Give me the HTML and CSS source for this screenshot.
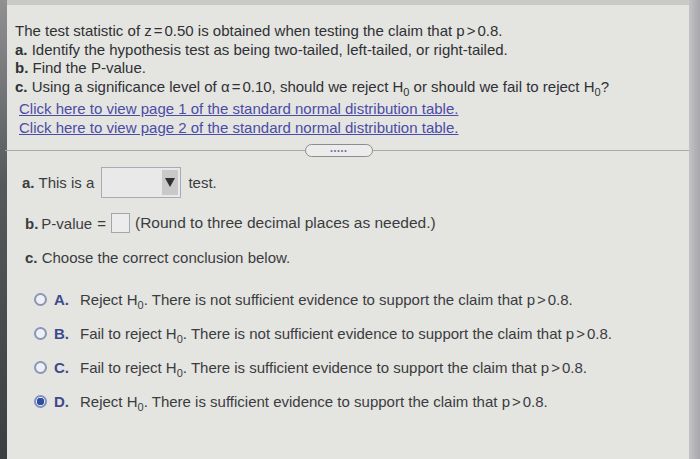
FILE: index.html
```html
<!DOCTYPE html>
<html>
<head>
<meta charset="utf-8">
<link rel="stylesheet" href="styles.css">
</head>
<body>
<div class="screen">
  <div class="leftbar"></div>
  <div class="main">
    <div class="topstrip"></div>
    <div class="question">
      <p class="line">The test statistic of z<span class="op">=</span>0.50 is obtained when testing the claim that p<span class="op">&gt;</span>0.8.</p>
      <p class="line"><span class="lbl">a.</span> Identify the hypothesis test as being two-tailed, left-tailed, or right-tailed.</p>
      <p class="line"><span class="lbl">b.</span> Find the P-value.</p>
      <p class="line"><span class="lbl">c.</span> Using a significance level of <i class="alpha">α</i><span class="op">=</span>0.10, should we reject H<sub>0</sub> or should we fail to reject H<sub>0</sub>?</p>
      <div class="links">
        <a class="link">Click here to view page 1 of the standard normal distribution table.</a>
        <a class="link">Click here to view page 2 of the standard normal distribution table.</a>
      </div>
    </div>
    <div class="divider">
      <span class="pill">•••••</span>
    </div>
    <div class="answers">
      <div class="row-a"><span class="lbl">a.</span> This is a <span class="select"><span class="arrow"></span></span> test.</div>
      <div class="row-b"><span class="lbl">b.</span> P-value <span class="op">=</span><span class="inputbox"></span> <span class="note">(Round to three decimal places as needed.)</span></div>
      <div class="row-c"><span class="lbl">c.</span> Choose the correct conclusion below.</div>
      <ul class="options">
        <li class="opt"><span class="radio"></span><span class="olbl">A.</span><span class="otext">Reject H<sub>0</sub>. There is not sufficient evidence to support the claim that p<span class="op">&gt;</span>0.8.</span></li>
        <li class="opt"><span class="radio"></span><span class="olbl">B.</span><span class="otext">Fail to reject H<sub>0</sub>. There is not sufficient evidence to support the claim that p<span class="op">&gt;</span>0.8.</span></li>
        <li class="opt"><span class="radio"></span><span class="olbl">C.</span><span class="otext">Fail to reject H<sub>0</sub>. There is sufficient evidence to support the claim that p<span class="op">&gt;</span>0.8.</span></li>
        <li class="opt"><span class="radio checked"></span><span class="olbl">D.</span><span class="otext">Reject H<sub>0</sub>. There is sufficient evidence to support the claim that p<span class="op">&gt;</span>0.8.</span></li>
      </ul>
    </div>
  </div>
  <div class="rightbar"><div class="scroll"></div></div>
</div>
</body>
</html>
```

FILE: styles.css
```css
* { box-sizing: border-box; }
html, body { margin: 0; padding: 0; }
body {
  width: 700px;
  height: 459px;
  overflow: hidden;
  background: #e3e3e0;
  font-family: "Liberation Sans", Arial, sans-serif;
  color: #35373a;
}
.screen {
  display: flex;
  width: 700px;
  height: 459px;
}
.leftbar {
  width: 7px;
  flex: none;
  background: linear-gradient(to bottom, #8f9092 0%, #55595b 40%, #3b3f41 100%);
}
.main {
  flex: 1;
  display: flex;
  flex-direction: column;
  background: #e4e4e1;
}
.topstrip {
  height: 5px;
  background: #c9c9c8;
}
.question {
  padding: 17px 0 0 8px;
  font-size: 15px;
  color: #2f3134;
}
.line { margin: 0; line-height: 18.5px; }
.lbl { font-weight: bold; }
.op { margin: 0 2px; }
.alpha { font-style: normal; }
sub { font-size: 11px; vertical-align: -4px; line-height: 0; }
.links {
  margin-top: 4px;
  display: flex;
  flex-direction: column;
}
.link {
  color: #4b4ca6;
  text-decoration: underline;
  line-height: 18.5px;
  margin-left: 4px;
}
.divider {
  margin: 13px 0 0 -2px;
  width: 684px;
  height: 2px;
  border-top: 1px solid #a9a9a9;
  position: relative;
}
.pill {
  position: absolute;
  left: 300px;
  top: -7px;
  width: 68px;
  height: 13px;
  border: 1px solid #8d8d8f;
  border-radius: 7px;
  background: #ececec;
  font-size: 7px;
  line-height: 11px;
  text-align: center;
  color: #6c6c92;
  letter-spacing: 1px;
}
.answers {
  padding: 14px 0 0 15px;
  font-size: 15px;
  color: #3a3c3f;
}
.row-a {
  display: flex;
  align-items: center;
  gap: 4px;
  height: 32px;
}
.select {
  display: inline-flex;
  justify-content: flex-end;
  align-items: center;
  width: 80px;
  height: 31px;
  border: 1px solid #a9aab6;
  background: #e9e9ea;
  margin: 0 3px 0 3px;
  padding: 2px;
}
.arrow {
  width: 16px;
  height: 25px;
  background: #c9c9c9;
  position: relative;
}
.arrow::after {
  content: "";
  position: absolute;
  left: 3px;
  top: 8px;
  border-left: 5px solid transparent;
  border-right: 5px solid transparent;
  border-top: 9px solid #2f3134;
}
.row-b {
  display: flex;
  align-items: center;
  margin-top: 15px;
  padding-left: 3px;
  gap: 3px;
}
.note { font-size: 15.5px; }
.inputbox {
  display: inline-block;
  width: 19px;
  height: 20px;
  border: 1px solid #a5a6ad;
  background: #ececec;
  margin-right: 2px;
}
.row-c {
  margin-top: 16px;
  padding-left: 3px;
}
.options {
  list-style: none;
  margin: 16px 0 0 0;
  padding: 0 0 0 12px;
  font-size: 15px;
}
.opt {
  display: flex;
  align-items: center;
  height: 34px;
}
.radio {
  width: 13px;
  height: 13px;
  border-radius: 50%;
  border: 2px solid #8a96b6;
  background: #eef0f3;
  margin-right: 7px;
  flex: none;
}
.radio.checked {
  border: 2px solid #7f8fc0;
  background: radial-gradient(circle, #2e4fa0 0 3.5px, #eef0f6 4px);
}
.olbl {
  font-weight: bold;
  color: #3c4a8c;
  width: 26px;
}
.otext { color: #3a3c3f; }
.rightbar {
  width: 27px;
  flex: none;
  display: flex;
  background: #e2e2e0;
}
.scroll {
  width: 17px;
  background: linear-gradient(to right, #c3c3c6, #a9a9ad 60%, #bdbdc0);
}
```
